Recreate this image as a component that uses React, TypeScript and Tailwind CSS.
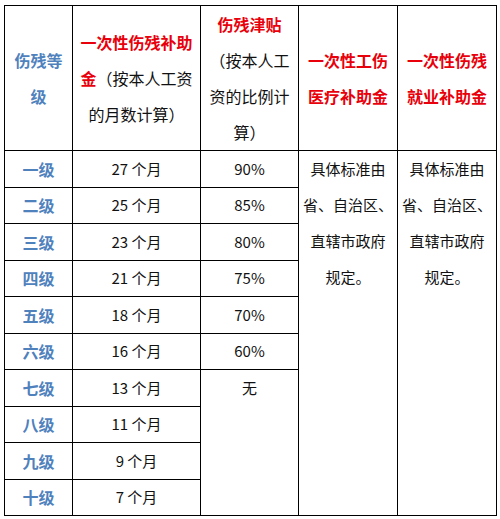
const blue = 'text-[#4f81bd]';
const red = 'text-[#e8000b]';

const grades = [
  { g: '一级', m: '27 个月', p: '90%' },
  { g: '二级', m: '25 个月', p: '85%' },
  { g: '三级', m: '23 个月', p: '80%' },
  { g: '四级', m: '21 个月', p: '75%' },
  { g: '五级', m: '18 个月', p: '70%' },
  { g: '六级', m: '16 个月', p: '60%' },
  { g: '七级', m: '13 个月', p: null },
  { g: '八级', m: '11 个月', p: null },
  { g: '九级', m: '9 个月', p: null },
  { g: '十级', m: '7 个月', p: null },
];

const cell = 'border border-black text-center p-0';

export default function App() {
  return (
    <div
      className="min-h-[519px] w-[500px] bg-white pl-[4px] pt-[5px] text-[#111]"
      style={{ fontFamily: '"Noto Sans CJK SC", "Noto Sans", sans-serif' }}
    >
      <table className="w-[492px] table-fixed border-collapse">
        <colgroup>
          <col className="w-[68px]" />
          <col className="w-[128px]" />
          <col className="w-[98px]" />
          <col className="w-[99px]" />
          <col className="w-[99px]" />
        </colgroup>
        <thead>
          <tr className="h-[144px] text-[16px] leading-[36px]">
            <th className={`${cell} align-middle font-bold ${blue}`}>
              伤残等
              <br />级
            </th>
            <th className={`${cell} align-middle font-normal`}>
              <span className={`font-bold ${red}`}>一次性伤残补助</span>
              <br />
              <span className={`font-bold ${red}`}>金</span>（按本人工资
              <br />的月数计算）
            </th>
            <th className={`${cell} align-top font-normal`}>
              <span className={`font-bold ${red}`}>伤残津贴</span>
              <br />（按本人工
              <br />资的比例计
              <br />算）
            </th>
            <th className={`${cell} align-middle font-bold ${red}`}>
              一次性工伤
              <br />医疗补助金
            </th>
            <th className={`${cell} align-middle font-bold ${red}`}>
              一次性伤残
              <br />就业补助金
            </th>
          </tr>
        </thead>
        <tbody className="text-[15px]">
          {grades.map((r, i) => (
            <tr key={r.g} className="h-[36.5px]">
              <td className={`${cell} align-middle text-[16px] font-bold ${blue}`}>{r.g}</td>
              <td className={`${cell} align-middle`}>{r.m}</td>
              {r.p ? (
                <td className={`${cell} align-middle`}>{r.p}</td>
              ) : i === 6 ? (
                <td rowSpan={4} className={`${cell} align-top leading-[36px]`}>
                  无
                </td>
              ) : null}
              {i === 0 && (
                <>
                  <td rowSpan={10} className={`${cell} align-top leading-[36px]`}>
                    具体标准由
                    <br />省、自治区、
                    <br />直辖市政府
                    <br />规定。
                  </td>
                  <td rowSpan={10} className={`${cell} align-top leading-[36px]`}>
                    具体标准由
                    <br />省、自治区、
                    <br />直辖市政府
                    <br />规定。
                  </td>
                </>
              )}
            </tr>
          ))}
        </tbody>
      </table>
    </div>
  );
}
